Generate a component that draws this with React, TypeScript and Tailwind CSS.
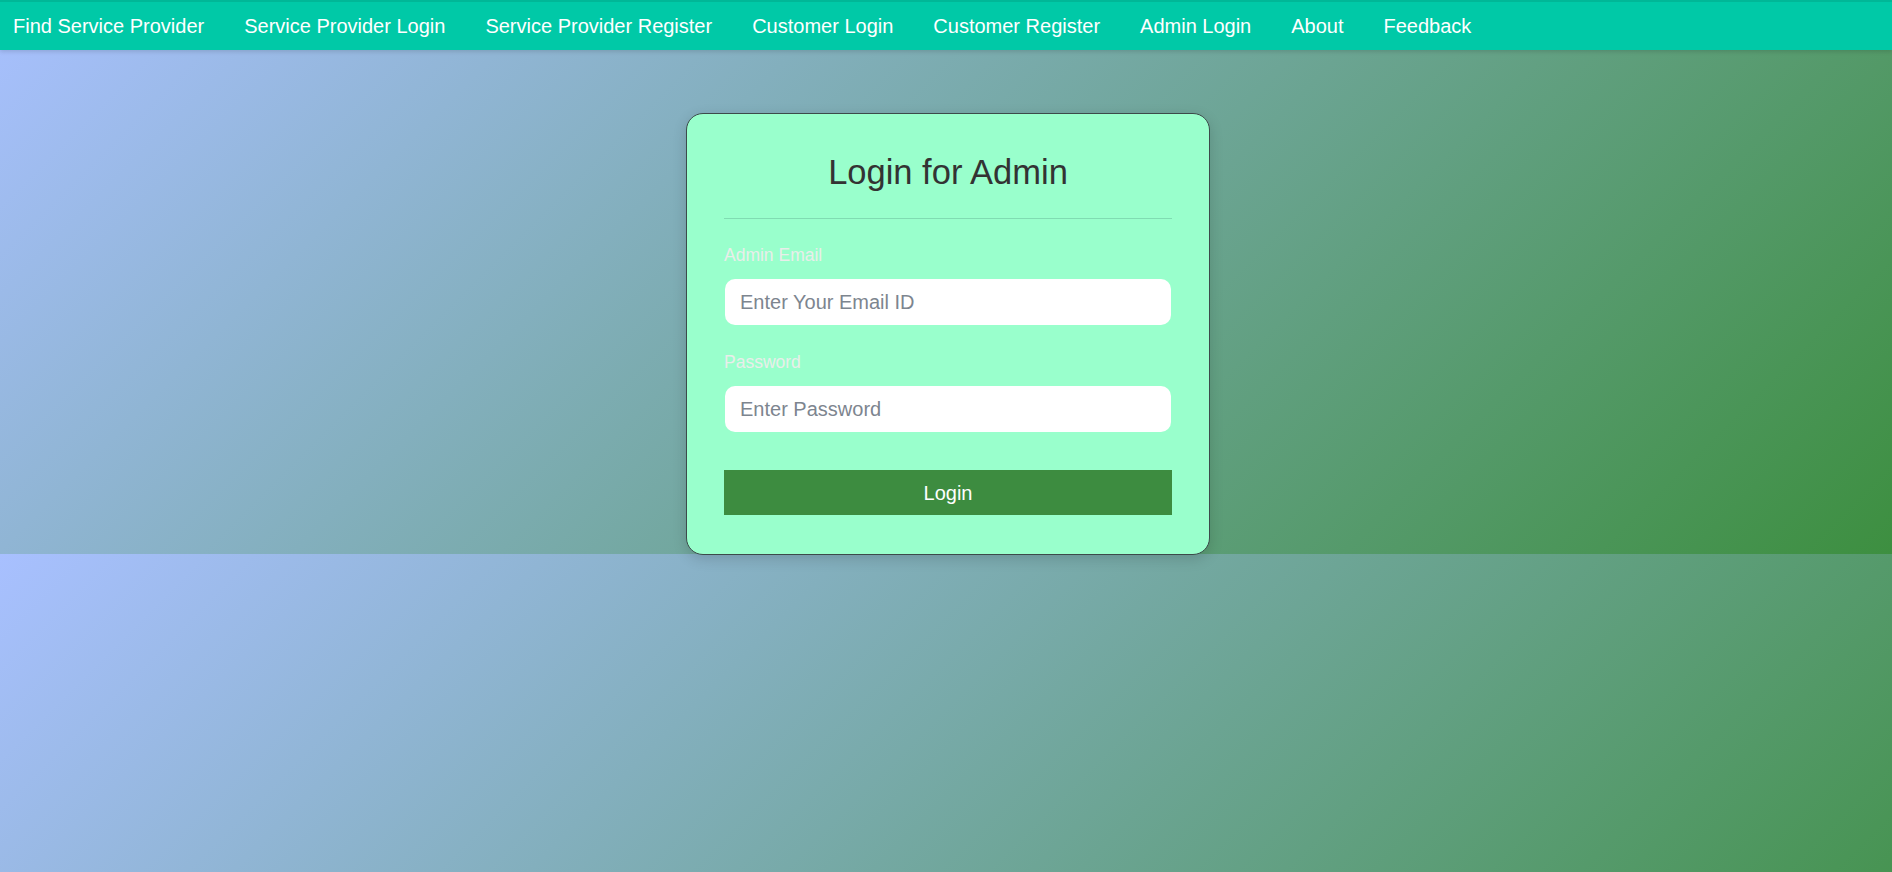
const links = [
  "Find Service Provider",
  "Service Provider Login",
  "Service Provider Register",
  "Customer Login",
  "Customer Register",
  "Admin Login",
  "About",
  "Feedback",
];

export default function App() {
  return (
    <div className="min-h-screen bg-[linear-gradient(135deg,#a8c0ff,#3d8f40)] bg-[length:100%_554px] bg-repeat font-['Liberation_Sans',Arial,sans-serif]">
      <nav className="h-[50px] bg-[#00c9a7] border-t-2 border-[#00b797] flex items-center gap-10 pl-[13px] shadow-[0_2px_4px_rgba(0,0,0,0.12)]">
        {links.map((l) => (
          <a key={l} href="#" className="text-white text-[20px] leading-[22px] whitespace-nowrap">
            {l}
          </a>
        ))}
      </nav>

      <div className="flex justify-center pt-[63px] pl-[4px]">
        <div className="w-[524px] bg-[#99ffcc] border border-[#3c4a4a] rounded-[17px] px-[37px] pt-[38px] pb-[39px] shadow-[0_4px_14px_rgba(0,0,0,0.15)]">
          <h2 className="text-center text-[34.5px] leading-[40px] text-[#333333]">Login for Admin</h2>
          <hr className="mt-[26px] border-0 h-px bg-[#80dcb2]" />

          <label className="block mt-[26px] text-[17.5px] leading-[20px] text-[#e9eeea]">Admin Email</label>
          <input
            type="email"
            placeholder="Enter Your Email ID"
            className="block mt-[14px] mx-px w-[446px] h-[46px] bg-white rounded-[10px] px-[15px] text-[20px] outline-none placeholder:text-[#7d858f]"
          />

          <label className="block mt-[27px] text-[17.5px] leading-[20px] text-[#e9eeea]">Password</label>
          <input
            type="password"
            placeholder="Enter Password"
            className="block mt-[14px] mx-px w-[446px] h-[46px] bg-white rounded-[10px] px-[15px] text-[20px] outline-none placeholder:text-[#7d858f]"
          />

          <button className="block w-full mt-[38px] h-[45px] bg-[#3d8c40] text-white text-[20px]">Login</button>
        </div>
      </div>
    </div>
  );
}
